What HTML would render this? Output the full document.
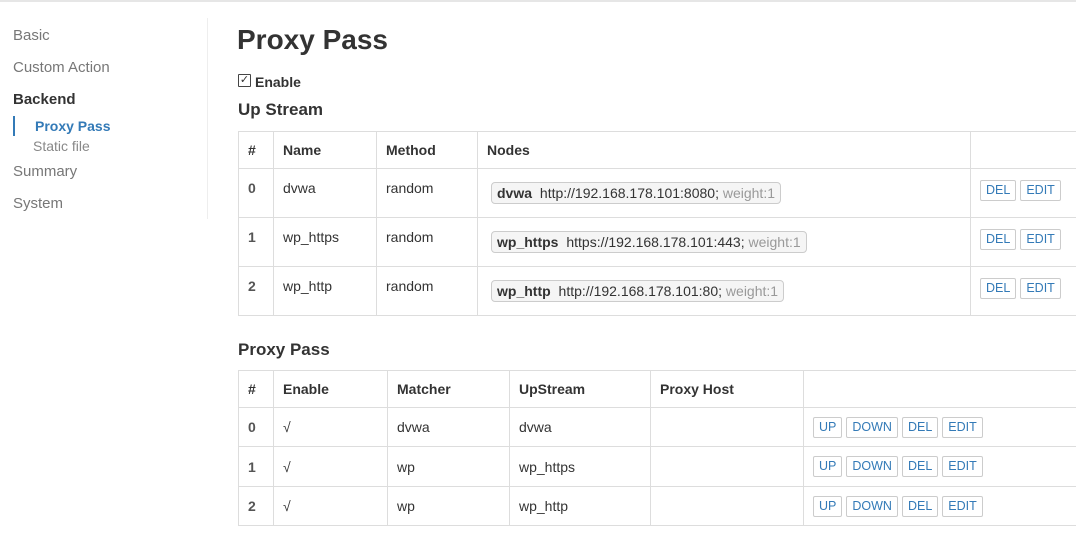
<!DOCTYPE html>
<html><head><meta charset="utf-8"><style>
*{box-sizing:border-box;margin:0;padding:0}
body{width:1076px;height:533px;overflow:hidden;background:#fff;font-family:"Liberation Sans",Arial,sans-serif;color:#333;font-size:14px;position:relative}
.a{position:absolute;white-space:nowrap}
.nav{font-size:15px;color:#777}
table{position:absolute;border-collapse:collapse;table-layout:fixed}
td,th{border:1px solid #ddd;text-align:left;padding:0 9px;font-size:14px;white-space:nowrap;overflow:hidden}
th{font-weight:bold}
#t1 td{vertical-align:top;padding-top:11px}
#t1 th,#t2 th{vertical-align:middle}
#t2 td{vertical-align:middle}
td.n{font-weight:bold;color:#555}
.badge{display:inline-block;background:#f5f5f5;border:1px solid #ccc;border-radius:4px;padding:2px 5px;margin-left:4px;margin-top:2px;line-height:16px}
.badge b{margin-right:4px}
.w{color:#999}
.btn{display:inline-block;border:1px solid #ccc;border-radius:2px;color:#337ab7;font-size:12.5px;padding:0 5px;line-height:19px;margin-right:4px;background:#fff}
</style></head><body>
<div class="a" style="left:0;top:0;width:1076px;height:2px;background:#e6e6e6"></div>
<div class="a nav" style="left:13px;top:27px">Basic</div>
<div class="a nav" style="left:13px;top:59px">Custom Action</div>
<div class="a nav" style="left:13px;top:91px;color:#333;font-weight:bold">Backend</div>
<div class="a" style="left:13px;top:116px;width:2px;height:20px;background:#337ab7"></div>
<div class="a" style="left:35px;top:118px;font-size:14px;font-weight:bold;color:#337ab7">Proxy Pass</div>
<div class="a" style="left:33px;top:138px;font-size:14px;color:#888">Static file</div>
<div class="a nav" style="left:13px;top:163px">Summary</div>
<div class="a nav" style="left:13px;top:195px">System</div>
<div class="a" style="left:207px;top:18px;width:1px;height:201px;background:#eee"></div>

<div class="a" style="left:237px;top:24px;font-size:28px;font-weight:bold">Proxy Pass</div>
<div class="a" style="left:238px;top:74px;width:13px;height:13px;border:1px solid #444;border-radius:1px;font-size:11px;line-height:11px;text-align:center">✓</div>
<div class="a" style="left:255px;top:74px;font-size:14px;font-weight:bold">Enable</div>
<div class="a" style="left:238px;top:100px;font-size:17px;font-weight:bold">Up Stream</div>

<table id="t1" style="left:238px;top:131px;width:860px">
<colgroup><col style="width:35px"><col style="width:103px"><col style="width:101px"><col style="width:493px"><col style="width:128px"></colgroup>
<tr style="height:37px"><th>#</th><th>Name</th><th>Method</th><th>Nodes</th><th></th></tr>
<tr style="height:49px"><td class="n">0</td><td>dvwa</td><td>random</td><td><span class="badge"><b>dvwa</b> http://192.168.178.101:8080; <span class="w">weight:1</span></span></td><td><span class="btn">DEL</span><span class="btn">EDIT</span></td></tr>
<tr style="height:49px"><td class="n">1</td><td>wp_https</td><td>random</td><td><span class="badge"><b>wp_https</b> https://192.168.178.101:443; <span class="w">weight:1</span></span></td><td><span class="btn">DEL</span><span class="btn">EDIT</span></td></tr>
<tr style="height:49px"><td class="n">2</td><td>wp_http</td><td>random</td><td><span class="badge"><b>wp_http</b> http://192.168.178.101:80; <span class="w">weight:1</span></span></td><td><span class="btn">DEL</span><span class="btn">EDIT</span></td></tr>
</table>

<div class="a" style="left:238px;top:340px;font-size:17px;font-weight:bold">Proxy Pass</div>

<table id="t2" style="left:238px;top:370px;width:860px">
<colgroup><col style="width:35px"><col style="width:114px"><col style="width:122px"><col style="width:141px"><col style="width:153px"><col style="width:295px"></colgroup>
<tr style="height:37px"><th>#</th><th>Enable</th><th>Matcher</th><th>UpStream</th><th>Proxy Host</th><th></th></tr>
<tr style="height:39px"><td class="n">0</td><td>√</td><td>dvwa</td><td>dvwa</td><td></td><td><span class="btn">UP</span><span class="btn">DOWN</span><span class="btn">DEL</span><span class="btn">EDIT</span></td></tr>
<tr style="height:40px"><td class="n">1</td><td>√</td><td>wp</td><td>wp_https</td><td></td><td><span class="btn">UP</span><span class="btn">DOWN</span><span class="btn">DEL</span><span class="btn">EDIT</span></td></tr>
<tr style="height:39px"><td class="n">2</td><td>√</td><td>wp</td><td>wp_http</td><td></td><td><span class="btn">UP</span><span class="btn">DOWN</span><span class="btn">DEL</span><span class="btn">EDIT</span></td></tr>
</table>
</body></html>
